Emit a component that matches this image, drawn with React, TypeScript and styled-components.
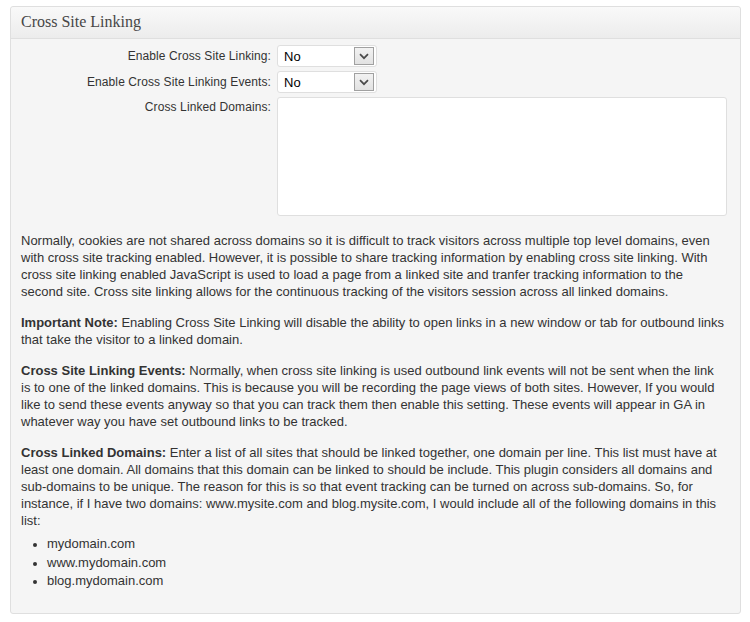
import React from "react";
import styled, { createGlobalStyle } from "styled-components";

const Global = createGlobalStyle`
  html, body { margin: 0; padding: 0; background: #ffffff; }
  body { font-family: "Liberation Sans", Arial, sans-serif; font-size: 13px; color: #333333; }
`;

const Page = styled.div`
  padding: 6px 9px 10px 10px;
`;

const Panel = styled.section`
  border: 1px solid #dfdfdf;
  border-radius: 3px;
  background: #f5f5f5;
`;

const Header = styled.h3`
  margin: 0;
  height: 31px;
  line-height: 29px;
  padding: 0 10px;
  font-family: "Liberation Serif", Georgia, serif;
  font-weight: normal;
  font-size: 16px;
  color: #464646;
  background: linear-gradient(to bottom, #f9f9f9, #ececec);
  border-bottom: 1px solid #dfdfdf;
  border-radius: 3px 3px 0 0;
`;

const Body = styled.div`
  padding: 6px 13px 22px 10px;
`;

const Form = styled.div`
  display: grid;
  grid-template-columns: 256px 1fr;
  row-gap: 4px;
`;

const Label = styled.label<{ $top?: boolean }>`
  text-align: right;
  padding-right: 6px;
  font-size: 12px;
  letter-spacing: 0.1px;
  line-height: 17px;
  color: #333333;
  align-self: ${(p) => (p.$top ? "start" : "center")};
  padding-top: ${(p) => (p.$top ? "2px" : "0")};
`;

const SelectBox = styled.div`
  width: 100px;
  height: 22px;
  box-sizing: border-box;
  border: 1px solid #dfdfdf;
  border-radius: 3px;
  background: #ffffff;
  display: flex;
  align-items: center;
  padding-left: 6px;
  font-size: 13px;
  color: #000000;
`;

const SelectValue = styled.span`
  flex: 1;
`;

const Arrow = styled.span`
  width: 20px;
  height: 18px;
  margin-right: 2px;
  box-sizing: border-box;
  border: 1px solid #a0a0a0;
  background: linear-gradient(to bottom, #f2f2f2, #e2e2e2);
  display: flex;
  align-items: center;
  justify-content: center;
`;

const TextArea = styled.div`
  height: 119px;
  box-sizing: border-box;
  border: 1px solid #dfdfdf;
  border-radius: 3px;
  background: #ffffff;
`;

const Desc = styled.div`
  margin: 16px 2px 0 0;
  line-height: 17px;
  color: #333333;
`;

const P = styled.p<{ $gap?: number }>`
  margin: 0 0 ${(p) => p.$gap ?? 14}px 0;
`;

const List = styled.ul`
  margin: 0;
  padding-left: 26px;
  line-height: 18.5px;
  & li::marker { font-size: 12px; color: #333333; }
`;

const Chevron = () => (
  <svg width="10" height="7" viewBox="0 0 10 7">
    <path d="M1 1.2 L5 5.2 L9 1.2" fill="none" stroke="#4a4a4a" strokeWidth="1.7" />
  </svg>
);

const Select = ({ value }: { value: string }) => (
  <SelectBox>
    <SelectValue>{value}</SelectValue>
    <Arrow>
      <Chevron />
    </Arrow>
  </SelectBox>
);

export default function App() {
  return (
    <>
      <Global />
      <Page>
        <Panel>
          <Header>Cross Site Linking</Header>
          <Body>
            <Form>
              <Label>Enable Cross Site Linking:</Label>
              <Select value="No" />
              <Label>Enable Cross Site Linking Events:</Label>
              <Select value="No" />
              <Label $top>Cross Linked Domains:</Label>
              <TextArea />
            </Form>
            <Desc>
              <P>
                Normally, cookies are not shared across domains so it is difficult to track visitors across multiple top level domains, even with cross site tracking enabled. However, it is possible to share tracking information by enabling cross site linking. With cross site linking enabled JavaScript is used to load a page from a linked site and tranfer tracking information to the second site. Cross site linking allows for the continuous tracking of the visitors session across all linked domains.
              </P>
              <P>
                <strong>Important Note:</strong> Enabling Cross Site Linking will disable the ability to open links in a new window or tab for outbound links that take the visitor to a linked domain.
              </P>
              <P>
                <strong>Cross Site Linking Events:</strong> Normally, when cross site linking is used outbound link events will not be sent when the link is to one of the linked domains. This is because you will be recording the page views of both sites. However, If you would like to send these events anyway so that you can track them then enable this setting. These events will appear in GA in whatever way you have set outbound links to be tracked.
              </P>
              <P $gap={6}>
                <strong>Cross Linked Domains:</strong> Enter a list of all sites that should be linked together, one domain per line. This list must have at least one domain. All domains that this domain can be linked to should be include. This plugin considers all domains and sub-domains to be unique. The reason for this is so that event tracking can be turned on across sub-domains. So, for instance, if I have two domains: www.mysite.com and blog.mysite.com, I would include all of the following domains in this list:
              </P>
              <List>
                <li>mydomain.com</li>
                <li>www.mydomain.com</li>
                <li>blog.mydomain.com</li>
              </List>
            </Desc>
          </Body>
        </Panel>
      </Page>
    </>
  );
}
